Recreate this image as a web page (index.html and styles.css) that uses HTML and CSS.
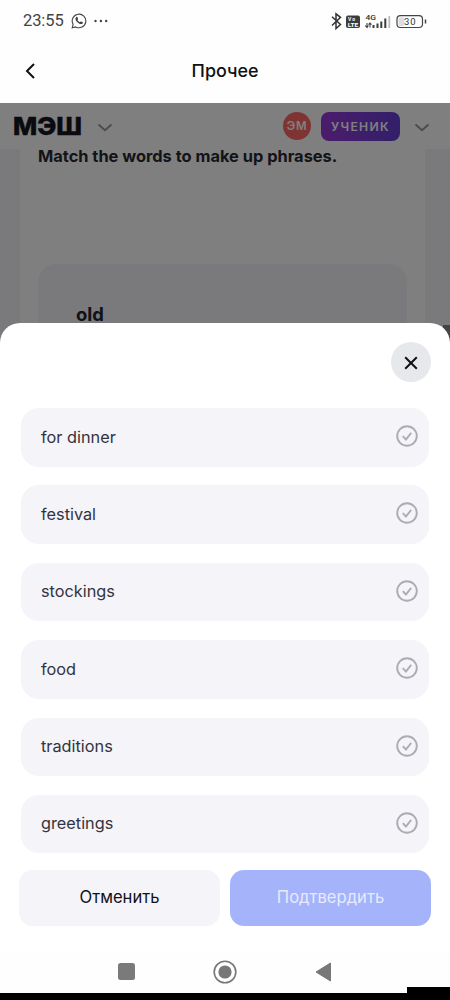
FILE: index.html
```html
<!DOCTYPE html>
<html lang="ru">
<head>
<meta charset="utf-8">
<title>Прочее</title>
<link rel="stylesheet" href="styles.css">
</head>
<body>
<div class="phone">
  <div class="status">
    <span class="time">23:55</span>
    <svg class="whatsapp" width="16" height="16" viewBox="0 0 16 16"><path d="M1.2 14.8l.9-3.5A6.8 6.8 0 1 1 4.7 13.9z" fill="none" stroke="#444" stroke-width="1.1"/><path d="M5.3 3.9c-1.5 1-1 3.2.8 5.1s4.200 2.800 5.500 1.400c.5-.6.400-1-.2-1.300l-1.200-.6c-.6-.3-.8.7-1.300.6-.9-.2-2-1.300-2.300-2.200-.1-.4.700-.7.500-1.200l-.5-1.200c-.3-.7-.7-.9-1.300-.6z" fill="#444"/></svg>
    <svg class="dots" width="14" height="4" viewBox="0 0 14 4"><g fill="#444"><circle cx="1.500" cy="2" r="1.200"/><circle cx="6.900" cy="2" r="1.200"/><circle cx="12.200" cy="2" r="1.200"/></g></svg>
    <svg class="signals" width="98" height="20" viewBox="0 0 98 20">
      <path d="M2 5.800l8.500 7.700-4.500 4V2.800l4.500 3.600L2 14.500" fill="none" stroke="#333" stroke-width="1.500"/>
      <rect x="16" y="4.500" width="14" height="12.500" rx="2" fill="#3c3c3c"/>
      <text class="tiny-white" x="18" y="9.800" textLength="7">Vo</text>
      <text class="tiny-white" x="17.700" y="15.900" textLength="10.600" lengthAdjust="spacingAndGlyphs">LTE</text>
      <text class="network" x="35.500" y="8.800" textLength="10.500" lengthAdjust="spacingAndGlyphs">4G</text>
      <path d="M37 12v4.500M40 12v4.500M35.200 14.500l1.800 2 1.300-2M38.500 13.700l1.500-1.700 1.500 1.700" fill="none" stroke="#444" stroke-width="1.100"/>
      <path d="M43.500 14v3M47.500 12.500V17M51.300 10.500V17M55.300 7.500V17" stroke="#3c3c3c" stroke-width="2"/>
      <path d="M59.300 5v12" stroke="#bbb" stroke-width="1.800"/>
      <rect x="67" y="4.700" width="25.500" height="11.800" rx="3.500" fill="#fff" stroke="#444" stroke-width="1.200"/>
      <rect x="68.500" y="6.200" width="6" height="8.800" rx="2" fill="#ddd"/>
      <path d="M95.500 8.500v4" stroke="#444" stroke-width="1.500"/>
      <text class="charge" x="74" y="14" textLength="11.500">30</text>
    </svg>
  </div>
  <header class="appbar">
    <svg class="back" width="12" height="18" viewBox="0 0 12 18"><path d="M10 2L3 9l7 7" fill="none" stroke="#111" stroke-width="2"/></svg>
    <h1 class="title">Прочее</h1>
  </header>
  <main class="page">
    <div class="sitebar">
      <svg class="logo" width="72" height="34" viewBox="0 0 72 34"><text class="logo-text" x="0" y="26" textLength="69" lengthAdjust="spacingAndGlyphs">МЭШ</text></svg>
      <svg class="chevron left" width="16" height="9" viewBox="0 0 16 9"><path d="M1.500 1.500L8 7.200l6.500-5.700"/></svg>
      <span class="avatar">ЭМ</span>
      <span class="role">УЧЕНИК</span>
      <svg class="chevron" width="16" height="9" viewBox="0 0 16 9"><path d="M1.500 1.500L8 7.200l6.500-5.700"/></svg>
    </div>
    <section class="task">
      <h2 class="question">Match the words to make up phrases.</h2>
      <div class="gap-card">old</div>
    </section>
    <div class="scroll-thumb"></div>
    <div class="backdrop"></div>
  </main>
  <section class="sheet">
    <button class="close"><svg width="14" height="14" viewBox="0 0 14 14"><path d="M1.200 1.200l11.600 11.600M12.800 1.200L1.200 12.800" stroke="#111" stroke-width="2"/></svg></button>
    <ul class="options">
      <li class="option">for dinner<svg class="check" viewBox="0 0 22 22"><circle cx="11" cy="11" r="9.800"/><path d="M6.800 11.200l3.100 3.300 5.300-6.700"/></svg></li>
      <li class="option">festival<svg class="check" viewBox="0 0 22 22"><circle cx="11" cy="11" r="9.800"/><path d="M6.800 11.200l3.100 3.300 5.300-6.700"/></svg></li>
      <li class="option">stockings<svg class="check" viewBox="0 0 22 22"><circle cx="11" cy="11" r="9.800"/><path d="M6.800 11.200l3.100 3.300 5.300-6.700"/></svg></li>
      <li class="option">food<svg class="check" viewBox="0 0 22 22"><circle cx="11" cy="11" r="9.800"/><path d="M6.800 11.200l3.100 3.300 5.300-6.700"/></svg></li>
      <li class="option">traditions<svg class="check" viewBox="0 0 22 22"><circle cx="11" cy="11" r="9.800"/><path d="M6.800 11.200l3.100 3.300 5.300-6.700"/></svg></li>
      <li class="option">greetings<svg class="check" viewBox="0 0 22 22"><circle cx="11" cy="11" r="9.800"/><path d="M6.800 11.200l3.100 3.300 5.300-6.700"/></svg></li>
    </ul>
    <div class="actions">
      <button class="btn">Отменить</button>
      <button class="btn primary">Подтвердить</button>
    </div>
  </section>
  <nav class="sysnav">
    <svg width="17" height="17" viewBox="0 0 17 17"><rect width="17" height="17" rx="2.500" fill="#7a7a7a"/></svg>
    <svg width="24" height="24" viewBox="0 0 24 24"><circle cx="12" cy="12" r="10.800" fill="none" stroke="#777" stroke-width="1.600"/><circle cx="12" cy="12" r="6.600" fill="#777"/></svg>
    <svg width="17" height="20" viewBox="0 0 17 20"><path d="M15.500 1v18L1 10z" fill="#777" stroke="#777" stroke-linejoin="round"/></svg>
  </nav>
  <footer class="edge"><div class="edge-block"></div></footer>
</div>
</body>
</html>
```
FILE: styles.css
```css
* { box-sizing: border-box; }
body { margin: 0; background: #fff; font-family: Inter, "Liberation Sans", sans-serif; }
button { border: 0; padding: 0; font: inherit; }
.phone { display: flex; flex-direction: column; width: 450px; height: 1000px; overflow: hidden; background: #fefefe; }

.status { display: flex; align-items: center; height: 41px; padding: 0 22px 0 23px; color: #444; }
.time { width: 48px; padding-top: 1px; font: 400 16.500px/20px Roboto, sans-serif; letter-spacing: -0.100px; }
.dots { margin-left: 7px; }
.signals { margin-left: auto; }
.tiny-white { font: 700 5px Roboto, sans-serif; fill: #fff; }
.network { font: 500 8px Roboto, sans-serif; fill: #333; }
.charge { font: 400 9.500px Roboto, sans-serif; fill: #333; }

.appbar { display: grid; grid-template-columns: 40px 1fr 40px; align-items: center; height: 62px; padding: 0 24px 2px; }
.back { display: block; }
.title { margin: 0; text-align: center; font-size: 17.900px; font-weight: 500; line-height: 24px; color: #111; }

.page { position: relative; flex: none; height: 240px; padding: 0 25px 0 20px; background: #f4f4fa; overflow: hidden; }
.sitebar { display: flex; align-items: center; height: 46px; margin: 0 -25px 0 -20px; padding: 0 20px 0 13px; background: #fff; }
.logo-text { font: 800 25px Inter, sans-serif; fill: #15151f; stroke: #15151f; stroke-width: 0.500px; }
.chevron { fill: none; stroke: #999; stroke-width: 2; margin-top: 3px; }
.chevron.left { margin-left: 12px; margin-right: auto; }
.avatar { display: flex; align-items: center; justify-content: center; width: 28px; height: 28px; border-radius: 50%; background: #ff6868; color: #fff; font-size: 11.500px; font-weight: 600; letter-spacing: 0.800px; }
.role { display: flex; align-items: center; justify-content: center; width: 79px; height: 29px; margin: 0 14px 0 10px; border-radius: 8px; background: linear-gradient(90deg, #9838d8, #6440d4); color: #fff; font-size: 12.200px; font-weight: 600; letter-spacing: 1.300px; }
.task { height: 194px; padding: 0 18px; background: #fff; }
.question { margin: -1px 0 0; padding: 0 0 99px; font-size: 16.400px; font-weight: 700; line-height: 17px; white-space: nowrap; color: #282830; }
.gap-card { height: 90px; padding: 37px 38px; border-radius: 18px; background: #f4f4f8; font-size: 18.400px; font-weight: 700; line-height: 26px; color: #24242b; }
.task { display: flow-root; }
.scroll-thumb { position: absolute; right: 0; top: 222px; width: 7px; height: 40px; background: #888890; }
.backdrop { position: absolute; inset: 0; background: rgba(0, 0, 0, 0.500); }

.sheet { position: relative; display: flex; flex-direction: column; flex: none; height: 629px; margin-top: -20px; padding: 19px 19px 0; border-radius: 20px 20px 0 0; background: #fff; }
.close { display: flex; align-items: center; justify-content: center; align-self: flex-end; width: 40px; height: 40px; border-radius: 50%; background: #e6e8ec; padding-top: 2px; }
.options { display: flex; flex-direction: column; gap: 18.900px; margin: 26px 2px 0; padding: 0; list-style: none; }
.option { display: flex; align-items: center; justify-content: space-between; height: 58.500px; padding: 0 11px 1.500px 20px; border-radius: 18px; background: #f4f4f9; color: #33333d; font-size: 16.300px; line-height: 24px; }
.check { width: 22px; height: 22px; margin-top: -1px; fill: none; stroke: #acacb4; stroke-width: 1.900; }
.actions { display: flex; gap: 10px; margin-top: 16.500px; }
.btn { flex: 1; height: 56px; padding-bottom: 1px; border-radius: 14px; background: #f4f4f9; color: #111118; font-size: 16.600px; }
.btn.primary { background: #a5b4fa; color: #e6eafd; }

.sysnav { display: flex; align-items: center; justify-content: space-between; height: 41px; padding: 0 118px 2px; }
.edge { height: 7px; margin-top: auto; background: #000; }
.edge-block { width: 43px; height: 13px; margin: -6px 0 0 auto; background: #000; position: relative; }
```
